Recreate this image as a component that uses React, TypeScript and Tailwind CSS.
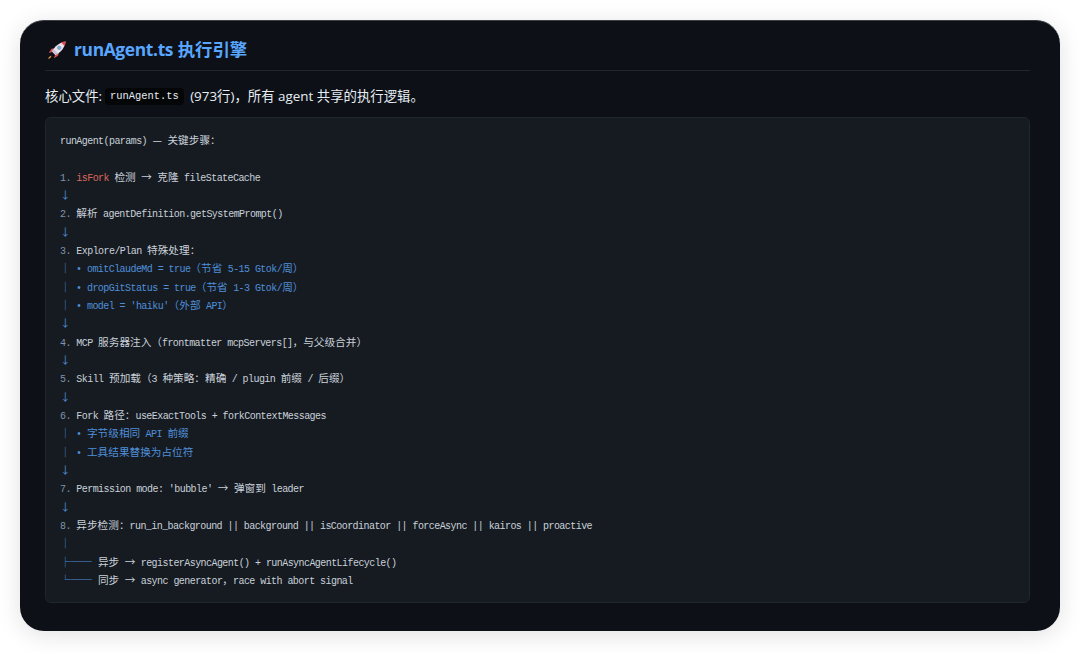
import React from 'react';

const WIDE = /([\u2014\u2190-\u2193\u2500-\u257f\u3000-\u303f\u4e00-\u9fff\uff00-\uffef]+)/;

const Code = ({ text }: { text: string }) => (
  <>
    {text.split(WIDE).map((part, i) =>
      WIDE.test(part) ? (
        <span key={i} className="font-['Noto_Sans_CJK_SC',monospace] text-[10.65px]">
          {part}
        </span>
      ) : (
        <span key={i} className="tracking-[-0.56px]">
          {part}
        </span>
      )
    )}
  </>
);

const Num = ({ n }: { n: string }) => (
  <span className="text-[#7f93a8]">
    <Code text={n} />
  </span>
);

const Blue = ({ text }: { text: string }) => (
  <span className="text-[#4f8fd8]">
    <Code text={text} />
  </span>
);

const Line = ({ children }: { children?: React.ReactNode }) => (
  <div className="h-[18.33px] whitespace-pre">{children}</div>
);

const Rocket = () => (
  <svg width="20" height="20" viewBox="0 0 20 20" className="shrink-0">
    <path d="M4.6 12.2 1.8 13l2.6-4.2 3-.6z" fill="#d9534f" />
    <path d="M7.8 15.4 7 18.2l4.2-2.6.6-3z" fill="#d9534f" />
    <path d="M4.2 15.8c-1.6.4-2.6 1.6-3 3.2 1.6-.4 2.8-1.4 3.2-3z" fill="#f59e2e" />
    <path d="M5 11.6C7.6 6.2 12.4 2.2 18.6 1.4 17.8 7.6 13.8 12.4 8.4 15z" fill="#e8e4ee" />
    <path d="M14 2.4c1.2-.5 3-.9 4.6-1-.1 1.6-.5 3.4-1 4.6z" fill="#e5484d" />
    <circle cx="12.2" cy="7.8" r="1.8" fill="#6fb4e8" stroke="#8d8fa8" strokeWidth=".6" />
    <path d="M5 11.6 6.4 9 11 13.6 8.4 15z" fill="#c9c2d6" />
  </svg>
);

export default function App() {
  return (
    <div className="h-[652px] w-[1080px] overflow-hidden bg-white p-5 pb-0">
      <div className="h-[611px] rounded-[24px] border-t border-[#3a3f46] bg-[#0d1117] pl-[25px] pr-[30px] shadow-[0_4px_24px_rgba(0,0,0,0.12)] font-['Open_Sans','Noto_Sans_CJK_SC',sans-serif]">
        <div className="flex h-[50px] items-center gap-[7px] border-b border-[#21262d] pl-[2px] pt-[8px]">
          <Rocket />
          <h1 className="text-[17.4px] font-bold leading-none text-[#58a6ff]">
            <span className="tracking-[-0.35px]">runAgent.ts</span> 执行引擎
          </h1>
        </div>
        <p className="mt-[14px] flex h-[22px] items-center whitespace-pre text-[13.4px] text-[#e6edf3]">
          核心文件:
          <code className="ml-[3px] mr-[3px] rounded-[4px] bg-[#050607] px-[5px] py-[2px] font-['Liberation_Mono',monospace] text-[10.4px] leading-[13px] text-[#e6edf3]">
            runAgent.ts
          </code>
          {' (973行)，所有 agent 共享的执行逻辑。'}
        </p>
        <div className="mt-[10px] h-[486px] rounded-[6px] border border-[#21262d] bg-[#161b22] px-[14px] pt-[13px] font-['Liberation_Mono','Noto_Sans_CJK_SC',monospace] text-[10px] leading-[18.33px] text-[#c9d1d9]">
          <Line><Code text="runAgent(params) — 关键步骤：" /></Line>
          <Line />
          <Line><Num n="1. " /><span className="text-[#d9685c]"><Code text="isFork" /></span><Code text=" 检测 → 克隆 fileStateCache" /></Line>
          <Line><Blue text="↓" /></Line>
          <Line><Num n="2. " /><Code text="解析 agentDefinition.getSystemPrompt()" /></Line>
          <Line><Blue text="↓" /></Line>
          <Line><Num n="3. " /><Code text="Explore/Plan 特殊处理：" /></Line>
          <Line><Blue text="│ • omitClaudeMd = true（节省 5-15 Gtok/周）" /></Line>
          <Line><Blue text="│ • dropGitStatus = true（节省 1-3 Gtok/周）" /></Line>
          <Line><Blue text="│ • model = 'haiku'（外部 API）" /></Line>
          <Line><Blue text="↓" /></Line>
          <Line><Num n="4. " /><Code text="MCP 服务器注入（frontmatter mcpServers[]，与父级合并）" /></Line>
          <Line><Blue text="↓" /></Line>
          <Line><Num n="5. " /><Code text="Skill 预加载（3 种策略：精确 / plugin 前缀 / 后缀）" /></Line>
          <Line><Blue text="↓" /></Line>
          <Line><Num n="6. " /><Code text="Fork 路径：useExactTools + forkContextMessages" /></Line>
          <Line><Blue text="│ • 字节级相同 API 前缀" /></Line>
          <Line><Blue text="│ • 工具结果替换为占位符" /></Line>
          <Line><Blue text="↓" /></Line>
          <Line><Num n="7. " /><Code text="Permission mode: 'bubble' → 弹窗到 leader" /></Line>
          <Line><Blue text="↓" /></Line>
          <Line><Num n="8. " /><Code text="异步检测：run_in_background || background || isCoordinator || forceAsync || kairos || proactive" /></Line>
          <Line><Blue text="│" /></Line>
          <Line><Blue text="├──" /><span className="ml-[6px]"><Code text="异步 → registerAsyncAgent() + runAsyncAgentLifecycle()" /></span></Line>
          <Line><Blue text="└──" /><span className="ml-[6px]"><Code text="同步 → async generator，race with abort signal" /></span></Line>
        </div>
      </div>
    </div>
  );
}
